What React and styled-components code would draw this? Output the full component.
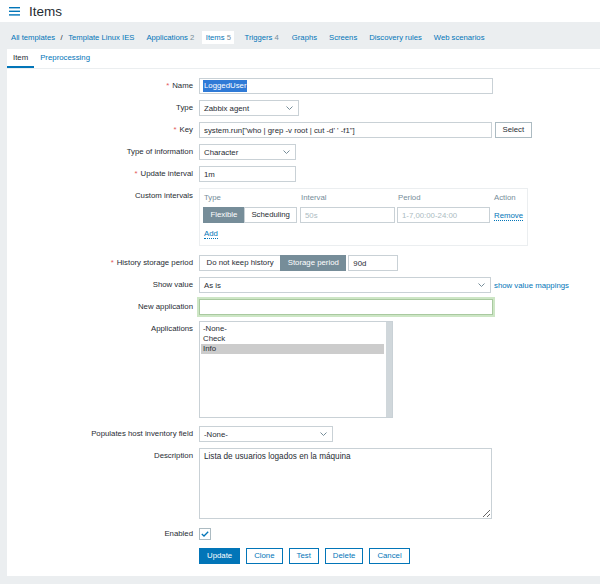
import React from 'react';
import styled, { createGlobalStyle } from 'styled-components';

const C = {
  text: '#1f2c33',
  blue: '#0275b8',
  grey: '#768d99',
  border: '#c9d1d6',
  bg: '#ebeef0',
  red: '#e45959',
  light: '#acbbc2',
};

const GlobalStyle = createGlobalStyle`
  html, body { margin: 0; padding: 0; background: ${C.bg}; }
  body {
    font-family: "Liberation Sans", Arial, sans-serif;
    font-size: 7.8px;
    color: ${C.text};
    width: 600px;
    height: 584px;
    overflow: hidden;
  }
  * { box-sizing: border-box; }
`;

const Header = styled.header`
  height: 22px;
  background: #fff;
  display: flex;
  align-items: center;
  gap: 9px;
  padding-left: 9px;
`;

const Title = styled.h1`
  margin: 0;
  font-size: 13.5px;
  font-weight: normal;
  line-height: 17px;
  color: ${C.text};
`;

const Nav = styled.nav`
  display: flex;
  align-items: center;
  height: 27px;
  padding: 9px 0 5px 7px;
  font-size: 7.7px;
`;

const NavItem = styled.a`
  padding: 0 ${(p) => (p.$active ? 3.5 : 4)}px;
  line-height: 13px;
  color: ${C.blue};
  text-decoration: none;
  background: ${(p) => (p.$active ? '#fff' : 'transparent')};
  margin-right: ${(p) => (p.$gap ?? 4)}px;
  white-space: nowrap;
`;

const Count = styled.span`
  color: ${C.grey};
`;

const Sep = styled.span`
  padding: 0 1.5px;
  color: ${C.text};
`;

const Panel = styled.main`
  margin-left: 7px;
  background: #fff;
  height: 527px;
`;

const Tabs = styled.div`
  display: flex;
  border-bottom: 1px solid ${C.bg};
`;

const Tab = styled.a`
  padding: 0 6px;
  line-height: 17px;
  border-bottom: 2px solid ${(p) => (p.$active ? C.blue : 'transparent')};
  color: ${(p) => (p.$active ? C.text : C.blue)};
  text-decoration: none;
`;

const Form = styled.div`
  display: grid;
  grid-template-columns: 186px 1fr;
  column-gap: 6px;
  row-gap: 6px;
  padding-top: 9px;
  align-items: start;
`;

const Label = styled.div`
  text-align: right;
  line-height: 16px;
  white-space: nowrap;
  margin-top: ${(p) => p.$mt || 0}px;
`;

const Star = styled.span`
  color: ${C.red};
  margin-right: 3px;
`;

const Field = styled.div`
  display: flex;
  align-items: center;
  gap: ${(p) => p.$gap ?? 3}px;
  margin-top: ${(p) => p.$mt || 0}px;
  margin-bottom: ${(p) => p.$mb || 0}px;
`;

const TextInput = styled.input`
  height: 16px;
  width: ${(p) => p.$w}px;
  border: 1px solid ${C.border};
  background: #fff;
  padding: 0 4px;
  font: inherit;
  color: ${(p) => (p.$muted ? C.light : C.text)};
  outline: none;
  box-shadow: ${(p) => (p.$focus ? '0 0 0 2px #cde6c5' : 'none')};
  border-color: ${(p) => (p.$focus ? '#a9c9a0' : C.border)};
`;

const FakeInput = styled.div`
  height: 16px;
  width: ${(p) => p.$w}px;
  border: 1px solid ${C.border};
  background: #fff;
  padding: 0 3px;
  display: flex;
  align-items: center;
`;

const Selected = styled.span`
  background: #2f7ad6;
  color: #fff;
  line-height: 12px;
  padding: 0 1px;
`;

const SelectBox = styled.div`
  height: 16px;
  width: ${(p) => p.$w}px;
  border: 1px solid ${C.border};
  background: #fff;
  padding: 0 5px 0 4px;
  display: flex;
  align-items: center;
  justify-content: space-between;
`;

const Chevron = () => (
  <svg width="7" height="4" viewBox="0 0 7 4">
    <polyline points="0.5,0.5 3.5,3.5 6.5,0.5" fill="none" stroke={C.grey} strokeWidth="1" />
  </svg>
);

const Select = ({ w, children }) => (
  <SelectBox $w={w}>
    <span>{children}</span>
    <Chevron />
  </SelectBox>
);

const Button = styled.button`
  height: 16px;
  padding: 0 ${(p) => (p.$plain ? 6.5 : 7)}px;
  font: inherit;
  border: 1px solid ${(p) => (p.$plain ? C.light : C.blue)};
  background: ${(p) => (p.$primary ? C.blue : '#fff')};
  color: ${(p) => (p.$primary ? '#fff' : p.$plain ? C.text : C.blue)};
  cursor: pointer;
  line-height: 14px;
`;

const Segmented = styled.div`
  display: flex;
`;

const SegButton = styled.button`
  height: 16px;
  padding: 0 6.5px;
  font: inherit;
  line-height: 14px;
  border: 1px solid ${(p) => (p.$active ? C.grey : C.border)};
  background: ${(p) => (p.$active ? C.grey : '#fff')};
  color: ${(p) => (p.$active ? '#fff' : C.text)};
  & + & { margin-left: -1px; }
`;

const IntervalsBox = styled.div`
  width: 329px;
  border: 1px solid ${C.bg};
  padding: 2px 3px 4px 3px;
  margin-bottom: 3px;
`;

const IntervalsGrid = styled.div`
  display: grid;
  grid-template-columns: 95px 95px 95px auto;
  column-gap: 2px;
  align-items: center;
`;

const ColHead = styled.div`
  color: ${C.grey};
  line-height: 14px;
  margin-bottom: 2px;
  padding-left: ${(p) => p.$pl || 0}px;
`;

const Link = styled.a`
  color: ${C.blue};
  text-decoration: none;
  border-bottom: ${(p) => (p.$dotted ? `1px dotted ${C.blue}` : 'none')};
  line-height: 9px;
  cursor: pointer;
`;

const AddRow = styled.div`
  line-height: 14px;
  margin-top: 4px;
  padding-left: 1px;
`;

const ListBox = styled.div`
  width: 194px;
  height: 97px;
  border: 1px solid ${C.border};
  display: flex;
  padding: 1px 0 0 1px;
`;

const Options = styled.div`
  flex: 1;
  margin-right: 2px;
  padding-top: 1px;
`;

const Option = styled.div`
  line-height: 10px;
  height: 10px;
  padding: 0 2px;
  background: ${(p) => (p.$selected ? '#cccccc' : 'transparent')};
`;

const ScrollTrack = styled.div`
  width: 6px;
  margin-top: -1px;
  background: #d0d7db;
`;

const TextArea = styled.textarea`
  width: 293px;
  height: 71px;
  border: 1px solid ${C.border};
  padding: 3px 4px;
  font-family: inherit;
  font-size: 8.2px;
  line-height: 9px;
  color: ${C.text};
  resize: both;
  outline: none;
  display: block;
`;

const CheckBox = styled.div`
  width: 12px;
  height: 12px;
  border: 1px solid ${C.light};
  background: #fff;
  display: flex;
  align-items: center;
  justify-content: center;
`;

const Buttons = styled.div`
  display: flex;
  gap: 6px;
`;

const Hamburger = () => (
  <svg width="11" height="9" viewBox="0 0 11 9">
    <rect x="0" y="0" width="11" height="1.4" fill={C.blue} />
    <rect x="0" y="3.6" width="11" height="1.4" fill={C.blue} />
    <rect x="0" y="7.2" width="11" height="1.4" fill={C.blue} />
  </svg>
);

const Req = ({ children }) => (
  <>
    <Star>*</Star>
    {children}
  </>
);

export default function App() {
  return (
    <>
      <GlobalStyle />
      <Header>
        <Hamburger />
        <Title>Items</Title>
      </Header>
      <Nav>
        <NavItem $gap={0}>All templates</NavItem>
        <Sep>/</Sep>
        <NavItem>Template Linux IES</NavItem>
        <NavItem>Applications <Count>2</Count></NavItem>
        <NavItem $active $gap={6}>Items <Count>5</Count></NavItem>
        <NavItem $gap={5}>Triggers <Count>4</Count></NavItem>
        <NavItem>Graphs</NavItem>
        <NavItem>Screens</NavItem>
        <NavItem>Discovery rules</NavItem>
        <NavItem>Web scenarios</NavItem>
      </Nav>
      <Panel>
        <Tabs>
          <Tab $active>Item</Tab>
          <Tab>Preprocessing</Tab>
        </Tabs>
        <Form>
          <Label><Req>Name</Req></Label>
          <Field>
            <FakeInput $w={294}><Selected>LoggedUser</Selected></FakeInput>
          </Field>

          <Label>Type</Label>
          <Field><Select w={100}>Zabbix agent</Select></Field>

          <Label><Req>Key</Req></Label>
          <Field>
            <TextInput $w={293} readOnly defaultValue={'system.run["who | grep -v root | cut -d\' \' -f1"]'} />
            <Button $plain>Select</Button>
          </Field>

          <Label>Type of information</Label>
          <Field><Select w={97}>Character</Select></Field>

          <Label><Req>Update interval</Req></Label>
          <Field><TextInput $w={97} readOnly defaultValue="1m" /></Field>

          <Label>Custom intervals</Label>
          <Field>
            <IntervalsBox>
              <IntervalsGrid>
                <ColHead $pl={1}>Type</ColHead>
                <ColHead $pl={1}>Interval</ColHead>
                <ColHead $pl={1}>Period</ColHead>
                <ColHead>Action</ColHead>
                <Segmented>
                  <SegButton $active>Flexible</SegButton>
                  <SegButton>Scheduling</SegButton>
                </Segmented>
                <TextInput $w={95} $muted readOnly defaultValue="50s" />
                <TextInput $w={93} $muted readOnly defaultValue="1-7,00:00-24:00" />
                <div><Link $dotted>Remove</Link></div>
              </IntervalsGrid>
              <AddRow><Link $dotted>Add</Link></AddRow>
            </IntervalsBox>
          </Field>

          <Label><Req>History storage period</Req></Label>
          <Field $gap={2}>
            <Segmented>
              <SegButton>Do not keep history</SegButton>
              <SegButton $active>Storage period</SegButton>
            </Segmented>
            <TextInput $w={50} readOnly defaultValue="90d" />
          </Field>

          <Label>Show value</Label>
          <Field $gap={3}>
            <Select w={292}>As is</Select>
            <Link>show value mappings</Link>
          </Field>

          <Label>New application</Label>
          <Field><TextInput $w={294} $focus readOnly defaultValue="" /></Field>

          <Label>Applications</Label>
          <Field>
            <ListBox>
              <Options>
                <Option>-None-</Option>
                <Option>Check</Option>
                <Option $selected>Info</Option>
              </Options>
              <ScrollTrack />
            </ListBox>
          </Field>

          <Label $mt={2}>Populates host inventory field</Label>
          <Field $mt={2}><Select w={134}>-None-</Select></Field>

          <Label>Description</Label>
          <Field>
            <TextArea readOnly defaultValue="Lista de usuarios logados en la máquina" />
          </Field>

          <Label $mt={1}>Enabled</Label>
          <Field $mt={1} style={{ height: 16 }}>
            <CheckBox>
              <svg width="8" height="6" viewBox="0 0 8 6">
                <polyline points="0.8,3 3,5 7.2,0.8" fill="none" stroke={C.blue} strokeWidth="1.3" />
              </svg>
            </CheckBox>
          </Field>

          <div />
          <Buttons>
            <Button $primary>Update</Button>
            <Button>Clone</Button>
            <Button>Test</Button>
            <Button>Delete</Button>
            <Button>Cancel</Button>
          </Buttons>
        </Form>
      </Panel>
    </>
  );
}
